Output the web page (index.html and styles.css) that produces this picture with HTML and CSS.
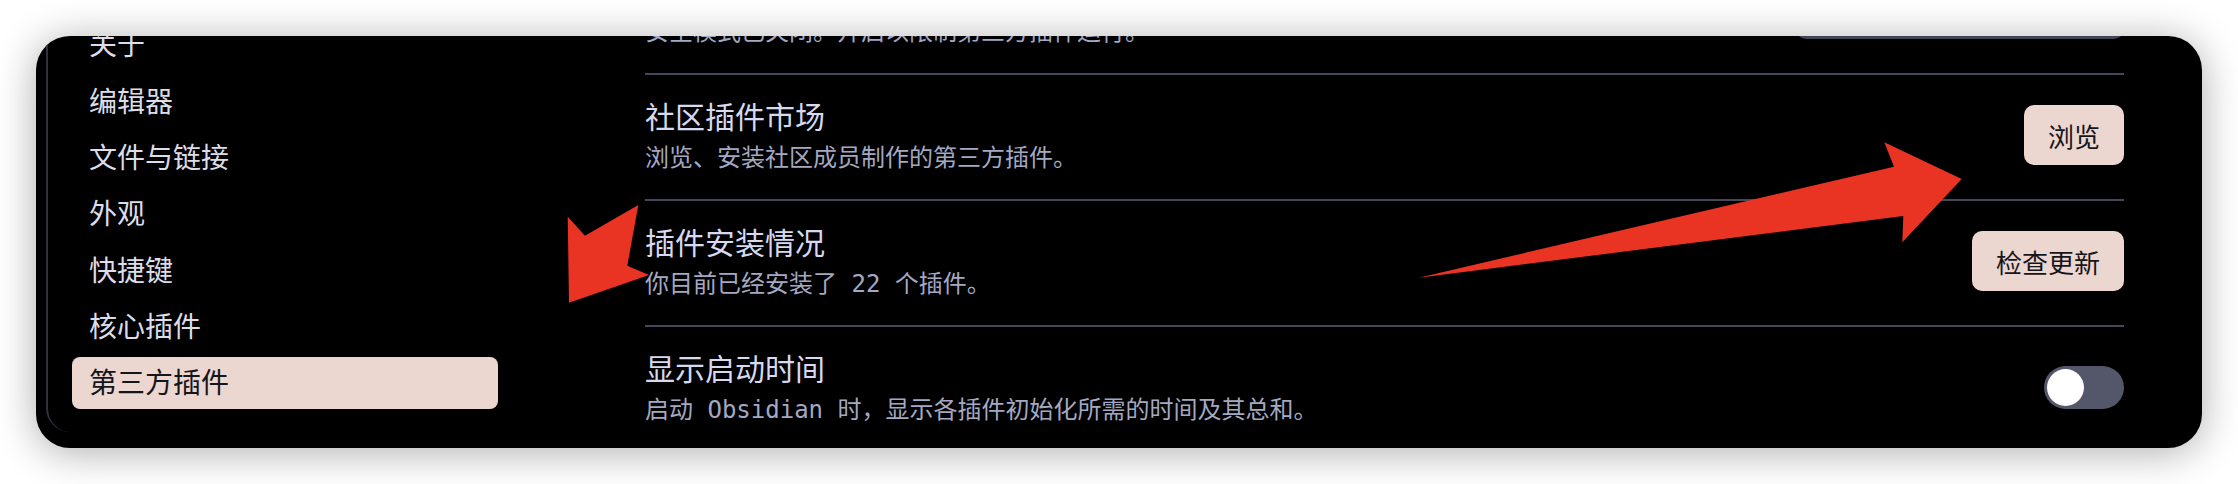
FILE: index.html
```html
<!DOCTYPE html>
<html lang="zh-CN">
<head>
<meta charset="utf-8">
<title>设置 - 第三方插件</title>
<link rel="stylesheet" href="styles.css">
</head>
<body>
<div class="stage">
  <div class="modal">
    <nav class="sidebar">
      <div class="nav-list">
        <div class="nav-item">关于</div>
        <div class="nav-item">编辑器</div>
        <div class="nav-item">文件与链接</div>
        <div class="nav-item">外观</div>
        <div class="nav-item">快捷键</div>
        <div class="nav-item">核心插件</div>
        <div class="nav-item is-active">第三方插件</div>
      </div>
    </nav>
    <main class="content">
      <div class="setting-item">
        <div class="setting-info">
          <div class="setting-name">安全模式</div>
          <div class="setting-desc">安全模式已关闭。开启以限制第三方插件运行。</div>
        </div>
        <button class="btn btn-muted">开启安全模式</button>
      </div>
      <div class="setting-item">
        <div class="setting-info">
          <div class="setting-name">社区插件市场</div>
          <div class="setting-desc">浏览、安装社区成员制作的第三方插件。</div>
        </div>
        <button class="btn">浏览</button>
      </div>
      <div class="setting-item">
        <div class="setting-info">
          <div class="setting-name">插件安装情况</div>
          <div class="setting-desc">你目前已经安装了 22 个插件。</div>
        </div>
        <button class="btn">检查更新</button>
      </div>
      <div class="setting-item">
        <div class="setting-info">
          <div class="setting-name">显示启动时间</div>
          <div class="setting-desc">启动 Obsidian 时，显示各插件初始化所需的时间及其总和。</div>
        </div>
        <div class="toggle"><span class="knob"></span></div>
      </div>
    </main>
  </div>
  <svg class="annotations" width="2238" height="484" viewBox="0 0 2238 484" xmlns="http://www.w3.org/2000/svg">
    <polygon fill="#e93323" points="569,302.7 567.7,216.7 585,235.7 638.3,205 627.3,265.7 649,275"/>
    <polygon fill="#e93323" points="1418.7,277.7 1894,166.7 1884.3,142.3 1961.7,179 1902.3,242.3 1903.3,216"/>
  </svg>
</div>
</body>
</html>
```

FILE: styles.css
```css
html, body {
  margin: 0;
  padding: 0;
  background: #ffffff;
  width: 2238px;
  height: 484px;
  overflow: hidden;
  font-family: "Noto Sans CJK SC", "Noto Sans", sans-serif;
}

.stage {
  position: relative;
  box-sizing: border-box;
  width: 2238px;
  height: 484px;
  padding: 36px;
}

.modal {
  width: 2166px;
  height: 412px;
  background: #000000;
  border-radius: 34px;
  box-shadow: 0 4px 40px rgba(0, 0, 0, 0.33);
  display: flex;
  overflow: hidden;
}

.sidebar {
  flex: none;
  width: 426px;
  margin: 0 0 16px 10px;
  padding-left: 24px;
  border-left: 2px solid #30313f;
  border-bottom-left-radius: 24px;
}

.nav-list {
  margin-top: -17.4px;
  display: flex;
  flex-direction: column;
  gap: 4.4px;
}

.nav-item {
  box-sizing: border-box;
  height: 52px;
  padding: 0 0 3px 17px;
  display: flex;
  align-items: center;
  font-size: 28px;
  color: #dcdde8;
  border-radius: 8px;
}

.nav-item.is-active {
  background: #ecd6d0;
  color: #15151c;
}

.content {
  flex: none;
  width: 1479px;
  margin-left: 147px;
  margin-top: -87px;
}

.setting-item {
  display: flex;
  align-items: center;
  justify-content: space-between;
  padding: 20px 0 24px;
  border-top: 2px solid #45475a;
}

.setting-item:first-child {
  border-top: none;
}

.setting-name {
  font-size: 30px;
  line-height: 40px;
  color: #d6d9f0;
}

.setting-desc {
  margin-top: 6px;
  font-family: "DejaVu Sans Mono", "Noto Sans CJK SC", monospace;
  font-size: 24px;
  line-height: 34px;
  color: #a4a8c2;
}

.btn {
  flex: none;
  height: 60px;
  padding: 0 24px;
  border: none;
  border-radius: 10px;
  background: #ecd6d0;
  color: #15151c;
  font-family: "Noto Sans CJK SC", sans-serif;
  font-size: 26px;
  white-space: nowrap;
}

.btn-muted {
  width: 328px;
  background: #414356;
  color: #cdd0e4;
}

.toggle {
  flex: none;
  box-sizing: border-box;
  width: 80px;
  height: 43px;
  padding: 3px;
  border-radius: 22px;
  background: #545669;
  display: flex;
  align-items: center;
}

.knob {
  width: 37px;
  height: 37px;
  border-radius: 50%;
  background: #ffffff;
}

.annotations {
  position: absolute;
  left: 0;
  top: 0;
  pointer-events: none;
}
```
